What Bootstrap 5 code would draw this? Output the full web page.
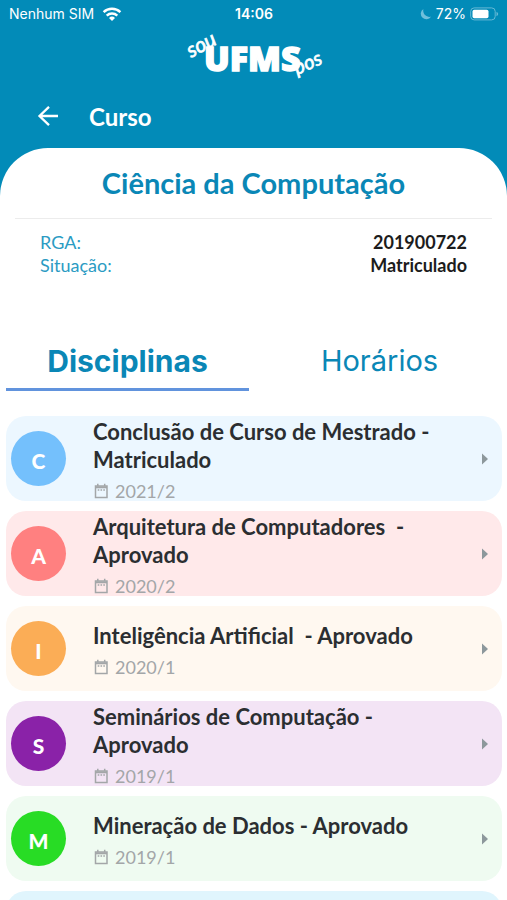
<!DOCTYPE html>
<html lang="pt-BR">
<head>
<meta charset="utf-8">
<meta name="viewport" content="width=device-width, initial-scale=1">
<title>Curso - sou UFMS pós</title>
<link href="https://cdn.jsdelivr.net/npm/bootstrap@5.3.0/dist/css/bootstrap.min.css" rel="stylesheet">
<style>
  :root { --brand: #028bb8; }
  body { font-family: Lato, "Open Sans", sans-serif; background: #fff; color: #262a2d; overflow-x: hidden; }
  .app-top { background: var(--brand); color: #fff; }
  .status-bar { font: 400 14px/20px Inter, sans-serif; padding: 4px 8px 0 9px; }
  .status-bar > div { flex: 1 1 0; }
  .logo-row { height: 58px; }
  .logo-row svg { overflow: visible; }
  .title-bar { height: 66px; padding: 4px 32px 0; gap: 26px; }
  .title-bar h1 { font-size: 24px; line-height: 30px; font-weight: 700; }
  .back-btn { width: 31px; height: 32px; color: #fff; }
  .sheet { border-radius: 48px 48px 0 0; background: #fff; padding-top: 17px; }
  .course { color: #0a87b6; font-size: 29px; line-height: 36px; font-weight: 700; }
  .rule { margin: 17px 15px 0; border-top: 1px solid #ececec; }
  .facts { padding: 12px 40px 0; font-size: 18px; line-height: 23px; }
  .facts dt { font-weight: 400; color: #2b9bc3; }
  .facts dd { font-weight: 700; color: #1c1c1c; }
  .tabs-row { padding: 60px 6px 0; gap: 9px; }
  .tab-btn { flex: 1 1 0; height: 54px; padding: 0 0 4px; border: 0; border-bottom: 3px solid transparent; background: none;
    font: 400 29px/34px Inter, sans-serif; color: #0a87b6; }
  .tab-btn.active { font-size: 30px; font-weight: 700; border-bottom-color: #6193dd; }
  .courses { padding: 25px 5px 0 6px; gap: 10px; }
  .course-item { height: 85px; border-radius: 20px; padding: 0 13px 0 5px; color: #2b2e31; }
  .course-item:hover { color: #2b2e31; }
  .bubble { width: 55px; height: 55px; font-size: 21px; font-weight: 900; color: #fff; padding-top: 4px; margin-right: 27px; }
  .course-name { font-size: 22px; line-height: 28px; font-weight: 700; }
  .course-text { max-width: 356px; }
  .term { font-size: 18px; line-height: 16px; margin-top: 9px; color: #a3a6a8; gap: 6px; }
  .sky { background: #ecf7ff; } .sky .bubble { background: #74c0fc; }
  .rose { background: #ffe9ea; } .rose .bubble { background: #ff8080; }
  .sand { background: #fff8f0; } .sand .bubble { background: #fbad56; }
  .plum { background: #f3e4f5; } .plum .bubble { background: #8a22a8; }
  .leaf { background: #effbf1; } .leaf .bubble { background: #28dc25; }
  .aqua { background: #e0f5fd; }
</style>
</head>
<body>
<svg class="d-none" aria-hidden="true">
  <symbol id="cal" viewBox="0 0 16 16"><path d="M2.500 3h11.500v11.500H2.500zM4.800 .8V3M11.700 .8V3" fill="none" stroke="currentColor" stroke-width="1.500"/><path d="M2.500 4.300H14" stroke="currentColor" stroke-width="2"/><path d="M4.700 7h1.600M7.500 7h1.600M10.300 7h1.600" stroke="currentColor" stroke-width="1.600"/></symbol>
  <symbol id="caret" viewBox="0 0 8 12"><path d="M1 .5 7 6 1 11.500z" fill="#8d989c"/></symbol>
</svg>
<div class="app-top">
  <div class="status-bar d-flex align-items-center">
    <div class="d-flex align-items-center gap-2"><span>Nenhum SIM</span>
      <svg width="20" height="15" viewBox="0 0 20 15" fill="none" stroke="#fff" stroke-width="2.400" aria-label="Wi-Fi"><path d="M1.600 5.200a12 12 0 0 1 16.800 0"/><path d="M4.700 8.600a7.600 7.600 0 0 1 10.600 0"/><path d="M10 14 7 10.900a4.300 4.300 0 0 1 6 0z" fill="#fff" stroke="none"/></svg>
    </div>
    <div class="text-center fw-semibold">14:06</div>
    <div class="d-flex align-items-center justify-content-end gap-1">
      <svg width="13" height="13" viewBox="0 0 13 13" aria-hidden="true"><path d="M4.400 .9a5.600 5.600 0 1 0 7.600 7.900C7.500 9.800 3.200 6 4.400 .9z" fill="#6fbfdb"/></svg>
      <span>72%</span>
      <svg width="29" height="14" viewBox="0 0 29 14" aria-label="Bateria"><rect x=".7" y=".9" width="24.500" height="12" rx="3.500" fill="none" stroke="#66b9d5"/><rect x="2.500" y="2.700" width="16" height="8.500" rx="1.800" fill="#fff"/><path d="M26.500 4.700v4.500q1.700-.7 1.700-2.250T26.500 4.700z" fill="#66b9d5"/></svg>
    </div>
  </div>
  <div class="logo-row d-flex justify-content-center">
    <svg width="144" height="58" viewBox="0 0 144 58" fill="#fff" stroke="#fff" role="img" aria-label="sou UFMS pós">
      <text transform="translate(9 34) rotate(-28)" font-family="Lato" font-style="italic" font-weight="400" font-size="21" stroke-width=".7">sou</text>
      <text x="22" y="47" font-family="Open Sans" font-weight="800" font-size="34" stroke-width="1.400">UFMS</text>
      <text transform="translate(115 51) rotate(-24)" font-family="Lato" font-style="italic" font-weight="400" font-size="20" stroke-width=".7">pos</text>
    </svg>
  </div>
  <header class="title-bar d-flex align-items-center">
    <button type="button" class="btn back-btn p-0 border-0 d-flex align-items-center justify-content-center" aria-label="Voltar">
      <svg width="22" height="22" viewBox="0 0 22 22" fill="none" stroke="currentColor" stroke-width="2.300"><path d="M21 10H3M12 .8 2.500 10l9.500 9.200"/></svg>
    </button>
    <h1 class="m-0">Curso</h1>
  </header>
  <div class="sheet">
    <h2 class="course text-center m-0">Ciência da Computação</h2>
    <div class="rule"></div>
    <dl class="facts m-0">
      <div class="d-flex justify-content-between"><dt>RGA:</dt><dd class="m-0">201900722</dd></div>
      <div class="d-flex justify-content-between"><dt>Situação:</dt><dd class="m-0">Matriculado</dd></div>
    </dl>
    <div class="tabs-row d-flex" role="tablist">
      <button type="button" role="tab" aria-selected="true" class="tab-btn active">Disciplinas</button>
      <button type="button" role="tab" aria-selected="false" class="tab-btn">Horários</button>
    </div>
    <main class="courses d-flex flex-column">
      <a href="#" class="course-item sky d-flex align-items-center text-decoration-none">
        <span class="bubble rounded-circle flex-shrink-0 d-flex align-items-center justify-content-center">C</span>
        <span class="course-text"><span class="course-name d-block">Conclusão de Curso de Mestrado - Matriculado</span>
        <span class="term d-flex align-items-center"><svg width="16" height="16"><use href="#cal"/></svg>2021/2</span></span>
        <svg class="ms-auto flex-shrink-0" width="8" height="12"><use href="#caret"/></svg>
      </a>
      <a href="#" class="course-item rose d-flex align-items-center text-decoration-none">
        <span class="bubble rounded-circle flex-shrink-0 d-flex align-items-center justify-content-center">A</span>
        <span class="course-text"><span class="course-name d-block">Arquitetura de Computadores&nbsp; - Aprovado</span>
        <span class="term d-flex align-items-center"><svg width="16" height="16"><use href="#cal"/></svg>2020/2</span></span>
        <svg class="ms-auto flex-shrink-0" width="8" height="12"><use href="#caret"/></svg>
      </a>
      <a href="#" class="course-item sand d-flex align-items-center text-decoration-none">
        <span class="bubble rounded-circle flex-shrink-0 d-flex align-items-center justify-content-center">I</span>
        <span class="course-text"><span class="course-name d-block">Inteligência Artificial&nbsp; - Aprovado</span>
        <span class="term d-flex align-items-center"><svg width="16" height="16"><use href="#cal"/></svg>2020/1</span></span>
        <svg class="ms-auto flex-shrink-0" width="8" height="12"><use href="#caret"/></svg>
      </a>
      <a href="#" class="course-item plum d-flex align-items-center text-decoration-none">
        <span class="bubble rounded-circle flex-shrink-0 d-flex align-items-center justify-content-center">S</span>
        <span class="course-text"><span class="course-name d-block">Seminários de Computação - Aprovado</span>
        <span class="term d-flex align-items-center"><svg width="16" height="16"><use href="#cal"/></svg>2019/1</span></span>
        <svg class="ms-auto flex-shrink-0" width="8" height="12"><use href="#caret"/></svg>
      </a>
      <a href="#" class="course-item leaf d-flex align-items-center text-decoration-none">
        <span class="bubble rounded-circle flex-shrink-0 d-flex align-items-center justify-content-center">M</span>
        <span class="course-text"><span class="course-name d-block">Mineração de Dados - Aprovado</span>
        <span class="term d-flex align-items-center"><svg width="16" height="16"><use href="#cal"/></svg>2019/1</span></span>
        <svg class="ms-auto flex-shrink-0" width="8" height="12"><use href="#caret"/></svg>
      </a>
      <div class="course-item aqua"></div>
    </main>
  </div>
</div>
<script src="https://cdn.jsdelivr.net/npm/bootstrap@5.3.0/dist/js/bootstrap.bundle.min.js"></script>
</body>
</html>
